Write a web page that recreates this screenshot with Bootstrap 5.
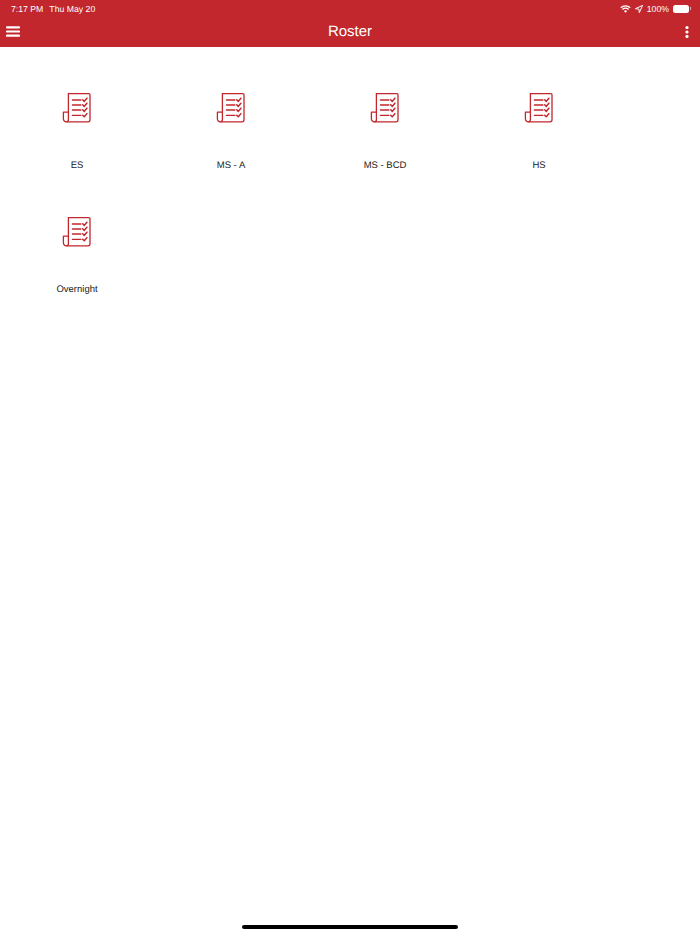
<!DOCTYPE html>
<html lang="en">
<head>
    <meta charset="UTF-8">
    <meta name="viewport" content="width=device-width, initial-scale=1.0">
    <title>Roster</title>
    <link rel="stylesheet" href="https://cdn.jsdelivr.net/npm/bootstrap@5.3.0/dist/css/bootstrap.min.css">
    <style>
        body {
            background: #fff;
            font-family: "Liberation Sans", Arial, sans-serif;
            text-rendering: geometricPrecision;
            height: 934px;
            overflow: hidden;
        }
        .app-header {
            background: #c1272d;
            color: #fff;
            height: 47px;
        }
        .status-line {
            height: 16px;
            font-size: 8.7px;
            line-height: 16px;
            padding: 1px 9px 0 11px;
        }
        .status-gap {
            gap: 6px;
        }
        .title-line {
            height: 31px;
            padding: 0 11px 0 6px;
        }
        .title-text {
            font-size: 15px;
            line-height: 31px;
        }
        .side-left {
            width: 45px;
        }
        .side-right {
            width: 40px;
        }
        .battery-box {
            flex: 0 0 16px;
            height: 8px;
            background: #fff;
            border: 1px solid rgba(255, 255, 255, .6);
            border-radius: 2.5px;
        }
        .battery-tip {
            width: 1px;
            height: 3px;
            background: rgba(255, 255, 255, .6);
            margin-left: 1px;
        }
        .roster-grid {
            padding-top: 44px;
        }
        .roster-item {
            width: 154px;
            height: 124px;
            color: #222;
            font-size: 9.5px;
        }
        .roster-item svg {
            display: block;
        }
        .roster-label {
            margin-top: 35.5px;
            line-height: 14px;
        }
        .home-bar {
            position: absolute;
            left: 242px;
            top: 925px;
            width: 216px;
            height: 4px;
            background: #000;
            border-radius: 2px;
        }
    </style>
</head>
<body>

    <svg width="0" height="0" class="position-absolute">
        <symbol id="rosterIcon" viewBox="0.6 0 30 32">
            <g fill="none" stroke="#c1272d" stroke-width="1.3" stroke-linecap="round" stroke-linejoin="round">
                <path d="M7 2.6h20.4a1.2 1.2 0 0 1 1.2 1.2v25a2 2 0 0 1-2 2H5.5"/>
                <path d="M7 2.6V28.8a2 2 0 0 1-2 2 3 3 0 0 1-3-3v-6.6h5"/>
                <path d="M11 9h8.5M11 14h8.5M11 19h8.5M11 24.4h8.5"/>
                <path d="M21.3 8.8l1.6 1.6 2.6-3.2M21.3 13.8l1.6 1.6 2.6-3.2M21.3 18.8l1.6 1.6 2.6-3.2M21.3 24.2l1.6 1.6 2.6-3.2" stroke-width="1.5"/>
            </g>
        </symbol>
    </svg>

    <header class="app-header">
        <div class="status-line d-flex justify-content-between align-items-center">
            <div class="d-flex status-gap"><span>7:17 PM</span><span>Thu May 20</span></div>
            <div class="d-flex align-items-center">
                <svg width="11" height="8" viewBox="0 0 11 8" fill="none" stroke="#fff" stroke-width="1.3" class="me-1">
                    <path d="M.8 2.8a6.7 6.7 0 0 1 9.4 0M2.4 4.5a4.4 4.4 0 0 1 6.2 0"/>
                    <path d="M5.5 7.8L3.9 6.1a2.3 2.3 0 0 1 3.2 0z" fill="#fff" stroke="none"/>
                </svg>
                <svg width="8" height="8" viewBox="0 0 8 8" class="me-1">
                    <path d="M7.6.4L.4 3.7l3.5.4.4 3.5z" fill="none" stroke="#fff" stroke-width="1"/>
                </svg>
                <span>100%</span>
                <div class="battery-box ms-1"></div>
                <div class="battery-tip"></div>
            </div>
        </div>
        <div class="title-line d-flex justify-content-between align-items-center">
            <div class="side-left">
                <svg width="14" height="11" viewBox="0 0 14 11" class="d-block">
                    <path d="M1 1.3h12M1 5.5h12M1 9.7h12" stroke="#fff" stroke-width="2.2" stroke-linecap="round"/>
                </svg>
            </div>
            <div class="title-text">Roster</div>
            <div class="side-right d-flex justify-content-end">
                <svg width="4" height="12" viewBox="0 0 4 12" class="d-block">
                    <circle cx="2" cy="1.6" r="1.6" fill="#fff"/>
                    <circle cx="2" cy="6" r="1.6" fill="#fff"/>
                    <circle cx="2" cy="10.4" r="1.6" fill="#fff"/>
                </svg>
            </div>
        </div>
    </header>

    <main class="roster-grid d-flex flex-wrap">
        <div class="roster-item d-flex flex-column align-items-center">
            <svg width="30" height="32"><use href="#rosterIcon"/></svg>
            <div class="roster-label">ES</div>
        </div>
        <div class="roster-item d-flex flex-column align-items-center">
            <svg width="30" height="32"><use href="#rosterIcon"/></svg>
            <div class="roster-label">MS - A</div>
        </div>
        <div class="roster-item d-flex flex-column align-items-center">
            <svg width="30" height="32"><use href="#rosterIcon"/></svg>
            <div class="roster-label">MS - BCD</div>
        </div>
        <div class="roster-item d-flex flex-column align-items-center">
            <svg width="30" height="32"><use href="#rosterIcon"/></svg>
            <div class="roster-label">HS</div>
        </div>
        <div class="roster-item d-flex flex-column align-items-center">
            <svg width="30" height="32"><use href="#rosterIcon"/></svg>
            <div class="roster-label">Overnight</div>
        </div>
    </main>

    <div class="home-bar"></div>

    <script src="https://cdn.jsdelivr.net/npm/bootstrap@5.3.0/dist/js/bootstrap.bundle.min.js"></script>
</body>
</html>
